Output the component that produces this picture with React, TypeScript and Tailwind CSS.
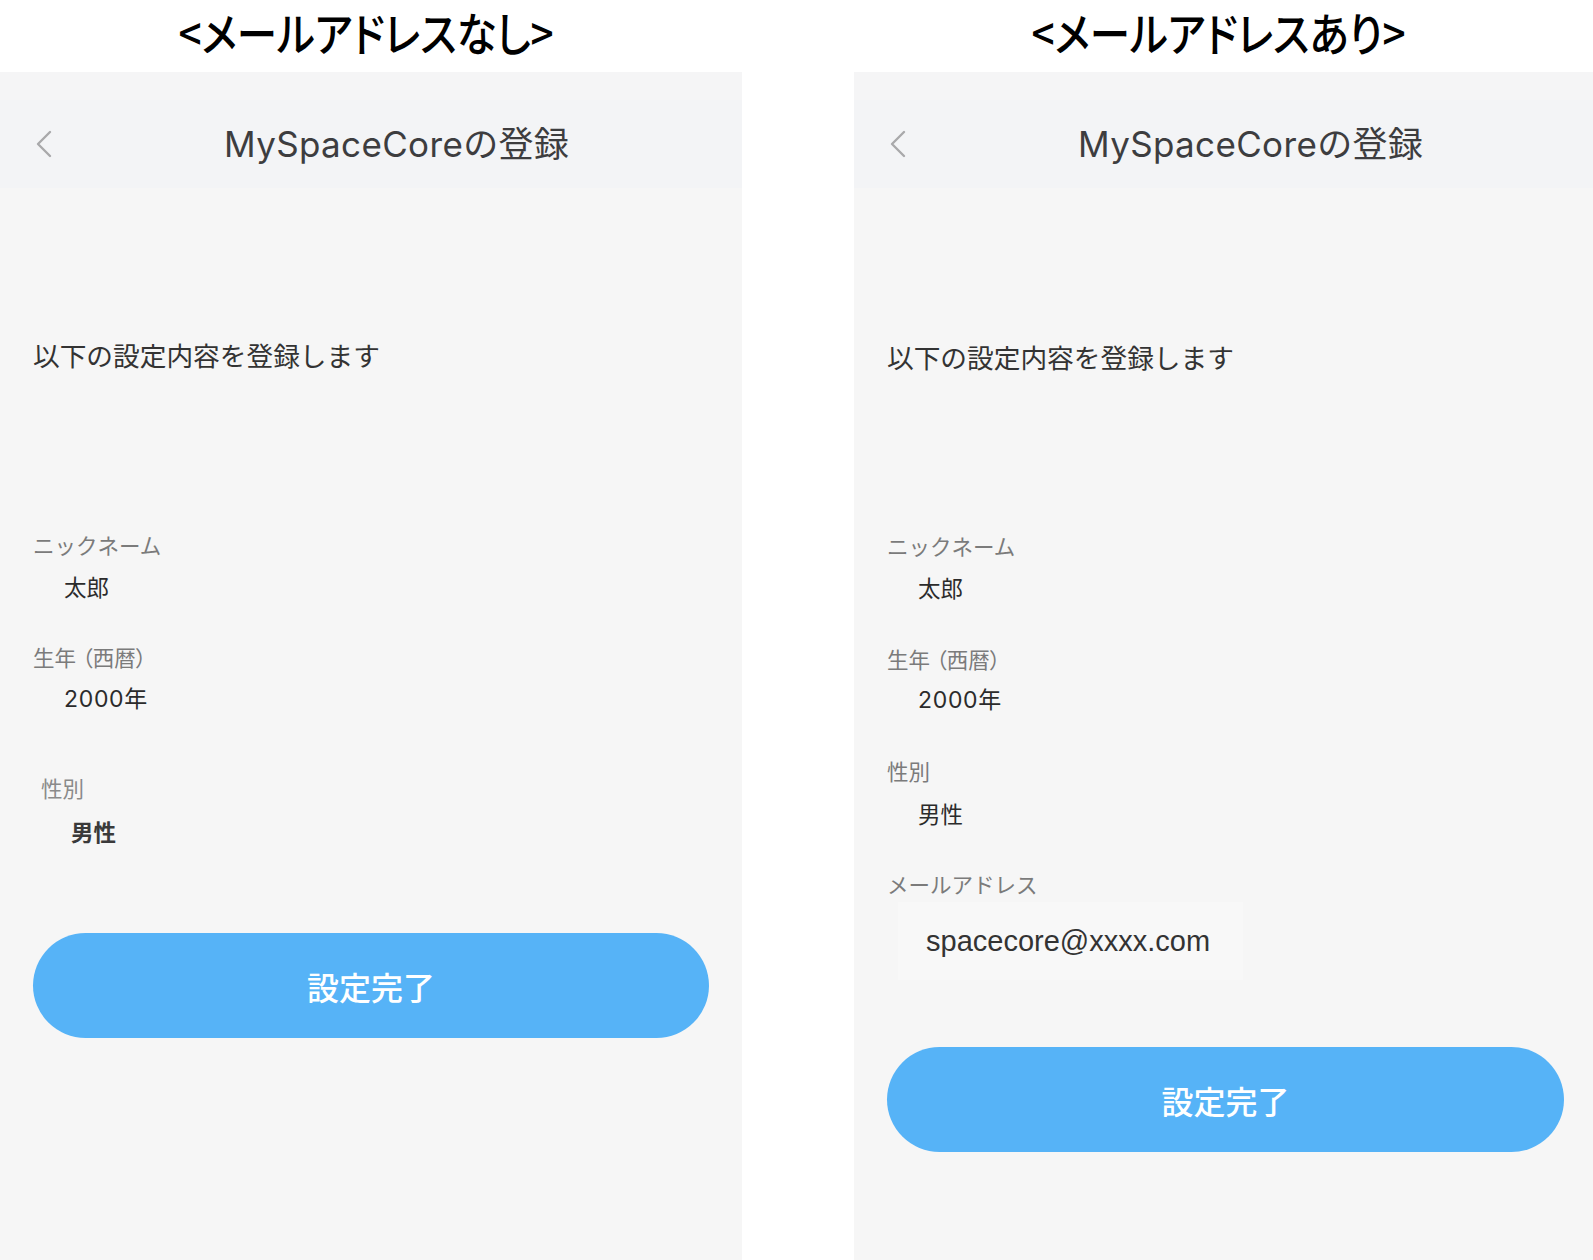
import { ReactNode } from "react";

const jp = "font-['Noto_Sans_CJK_JP','Noto_Sans',sans-serif]";
const latin = "font-['Inter','Noto_Sans_CJK_JP',sans-serif]";

type Field = { label: ReactNode; value: string };

const fields: Field[] = [
  { label: "ニックネーム", value: "太郎" },
  {
    label: (
      <>
        生年<span className="ml-[6px] [font-feature-settings:'palt']">（西暦）</span>
      </>
    ),
    value: "2000年",
  },
  { label: "性別", value: "男性" },
];

const Chevron = () => (
  <svg width="16" height="28" viewBox="0 0 16 28" fill="none" stroke="#a9a9ab" strokeWidth="2.4" strokeLinecap="round" strokeLinejoin="round">
    <polyline points="14,2 2,14 14,26" />
  </svg>
);

const Screen = ({ heading, email }: { heading: string; email?: string }) => {
  const withEmail = Boolean(email);

  return (
    <div className={withEmail ? "flex w-[739px] flex-col" : "flex w-[742px] flex-col"}>
      <div className="flex h-[72px] items-start justify-center pt-[8px] pr-[10px]">
        <h1 className={`${jp} scale-x-[0.88] text-[46px] leading-none font-medium whitespace-nowrap text-black [font-feature-settings:'palt']`}>
          {heading}
        </h1>
      </div>

      <div className="flex flex-1 flex-col bg-[#f6f6f6]">
        <header className="flex h-[116px] flex-col bg-[#f3f4f6]">
          <div className="h-[28px] bg-[#f5f5f6]" />
          <div className="flex flex-1 items-center pl-[36px]">
            <Chevron />
            <span className={`${latin} ml-[172px] text-[35px] leading-none tracking-[0.01em] whitespace-nowrap text-[#3d3d3f]`}>
              MySpaceCoreの登録
            </span>
          </div>
        </header>

        <div className={`${jp} flex flex-col px-[33px]`}>
          <p className={withEmail ? "mt-[151px] text-[26.7px] leading-[36px] text-[#333]" : "mt-[149px] text-[26.7px] leading-[36px] text-[#333]"}>
            以下の設定内容を登録します
          </p>

          {withEmail ? (
            <>
              <span className="mt-[156px] text-[21.5px] leading-[30px] text-[#7b7b7b]">{fields[0].label}</span>
              <span className="mt-[11px] pl-[31px] text-[22.5px] leading-[30px] text-[#2b2b2b]">{fields[0].value}</span>
              <span className="mt-[42px] text-[21.5px] leading-[30px] text-[#7b7b7b]">{fields[1].label}</span>
              <span className={`${latin} mt-[11px] pl-[31px] text-[23px] leading-[30px] tracking-[0.03em] text-[#2b2b2b]`}>{fields[1].value}</span>
              <span className="mt-[41px] text-[21.5px] leading-[30px] text-[#7b7b7b]">{fields[2].label}</span>
              <span className="mt-[12px] pl-[31px] text-[22.5px] leading-[30px] text-[#2b2b2b]">{fields[2].value}</span>
              <span className="mt-[41px] text-[21.5px] leading-[30px] text-[#7b7b7b]">メールアドレス</span>
              <div className="mt-[3px] ml-[11px] flex h-[78px] w-[345px] items-center bg-[#f8f8f8] pl-[28px]">
                <span className="font-['Liberation_Sans',Arial,sans-serif] text-[29px] leading-none whitespace-nowrap text-[#333]">
                  {email}
                </span>
              </div>
              <button className="mt-[67px] flex h-[105px] w-[677px] items-center justify-center rounded-full bg-[#56b3f7] text-[32px] font-medium text-white">
                設定完了
              </button>
            </>
          ) : (
            <>
              <span className="mt-[157px] text-[21.5px] leading-[30px] text-[#7b7b7b]">{fields[0].label}</span>
              <span className="mt-[11px] pl-[31px] text-[22.5px] leading-[30px] text-[#2b2b2b]">{fields[0].value}</span>
              <span className="mt-[41px] text-[21.5px] leading-[30px] text-[#7b7b7b]">{fields[1].label}</span>
              <span className={`${latin} mt-[12px] pl-[31px] text-[23px] leading-[30px] tracking-[0.03em] text-[#2b2b2b]`}>{fields[1].value}</span>
              <span className="mt-[59px] pl-[8px] text-[21.5px] leading-[30px] text-[#8a8a8a]">{fields[2].label}</span>
              <span className="mt-[13px] pl-[38px] text-[22.5px] leading-[30px] font-semibold text-[#3a3a3a]">{fields[2].value}</span>
              <button className="mt-[87px] flex h-[105px] w-[676px] items-center justify-center rounded-full bg-[#56b3f7] text-[32px] font-medium text-white">
                設定完了
              </button>
            </>
          )}
        </div>
      </div>
    </div>
  );
};

export default function App() {
  return (
    <div className="flex h-[1260px] w-[1593px] gap-[112px] bg-white">
      <Screen heading="<メールアドレスなし>" />
      <Screen heading="<メールアドレスあり>" email="spacecore@xxxx.com" />
    </div>
  );
}
